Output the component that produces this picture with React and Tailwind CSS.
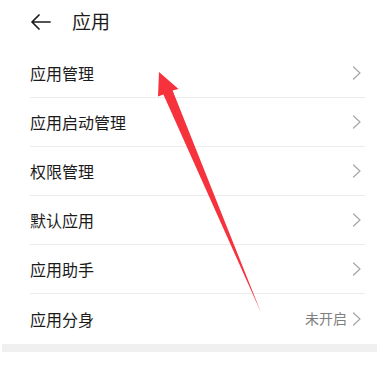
const ITEMS = [
  { label: '应用管理' },
  { label: '应用启动管理' },
  { label: '权限管理' },
  { label: '默认应用' },
  { label: '应用助手' },
  { label: '应用分身', value: '未开启' },
]

const font = { fontFamily: '"Noto Sans CJK SC", "Noto Sans", sans-serif' }

const Chevron = () => (
  <svg width="10" height="14" viewBox="0 0 10 14" fill="none" stroke="#a6a6a6" strokeWidth="1.2" strokeLinecap="round" strokeLinejoin="round">
    <path d="M1.5 1L8 7l-6.5 6" />
  </svg>
)

const Row = ({ item, last }) => (
  <div className="pl-[30px] pr-[12px]">
    <div
      className={`h-[49px] flex items-center justify-between ${last ? '' : 'border-b border-[#ececec]'}`}
    >
      <span className="text-[16px] text-[#1b1b1b]">{item.label}</span>
      <div className="flex items-center gap-[5px] pr-[3px]">
        {item.value && <span className="text-[14px] text-[#7f7f7f]">{item.value}</span>}
        <Chevron />
      </div>
    </div>
  </div>
)

export default function App() {
  return (
    <div className="relative w-[377px] h-[369px] bg-white overflow-hidden" style={font}>
      {/* Header */}
      <div className="h-[49px] flex items-center pl-[30px] pb-[6px]">
        <svg width="22" height="16" viewBox="0 0 22 16" fill="none" stroke="#1b1b1b" strokeWidth="1.7" strokeLinecap="round" strokeLinejoin="round">
          <path d="M20 8H2M9 1L2 8l7 7" />
        </svg>
        <span className="ml-[20px] text-[19px] text-[#1b1b1b]">应用</span>
      </div>

      {ITEMS.map((item, i) => (
        <Row key={item.label} item={item} last={i === ITEMS.length - 1} />
      ))}

      <div className="ml-[2px] h-[8px] bg-[#f0f0f0] mt-[1px]" />

      <div className="pl-[32px] pt-[15px] text-[15px] leading-[20px] text-[#1b1b1b]">应用设置</div>

      {/* annotation arrow */}
      <svg className="absolute left-0 top-0 pointer-events-none" width="377" height="369" viewBox="0 0 377 369">
        <polygon
          points="159,72 178.5,89 172.6,90.5 261,312.5 163.4,94.5 158,96.5"
          fill="#f6323c"
        />
      </svg>
    </div>
  )
}
